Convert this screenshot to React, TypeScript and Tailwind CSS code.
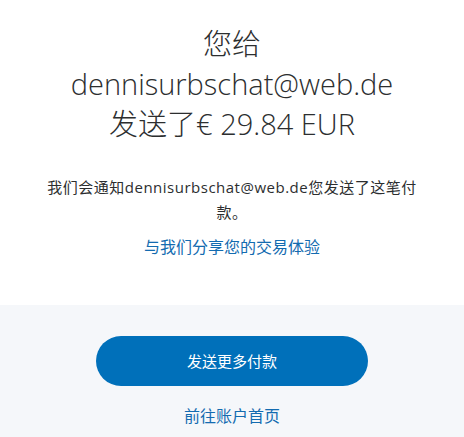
export default function App() {
  const font = { fontFamily: '"Open Sans", "Noto Sans CJK SC", sans-serif' };
  return (
    <div className="w-[464px] h-[437px] flex flex-col bg-white text-[#2c2e2f]" style={font}>
      {/* Confirmation */}
      <div className="h-[305px] flex flex-col items-center pt-[24px] text-center">
        <h1 className="text-[29px] leading-[40px] font-light">
          您给
          <br />
          dennisurbschat@web.de
          <br />
          发送了€ 29.84 EUR
        </h1>
        <p className="mt-[31px] w-[384px] text-[15px] leading-[25px] tracking-[0.5px]">
          我们会通知dennisurbschat@web.de您发送了这笔付款。
        </p>
        <a href="#" className="mt-[10px] text-[16px] leading-[24px] text-[#136bb0]">
          与我们分享您的交易体验
        </a>
      </div>

      {/* Actions */}
      <div className="flex-1 bg-[#f5f7fa] flex flex-col items-center pt-[31px]">
        <button className="w-[272px] h-[50px] rounded-full bg-[#0070ba] text-white text-[15px]">
          发送更多付款
        </button>
        <a href="#" className="mt-[18px] text-[16px] leading-[24px] text-[#136bb0]">
          前往账户首页
        </a>
      </div>
    </div>
  );
}
